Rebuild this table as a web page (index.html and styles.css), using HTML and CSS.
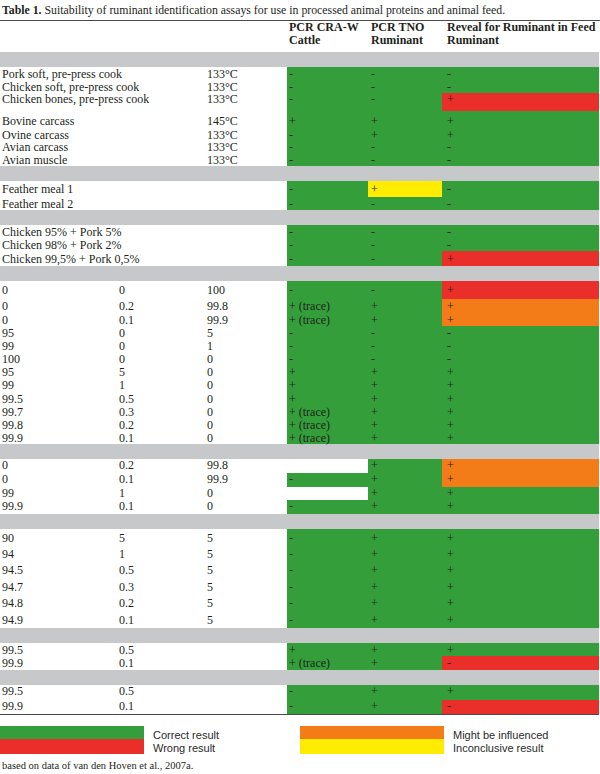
FILE: index.html
```html
<!DOCTYPE html>
<html lang="en">
<head>
<meta charset="utf-8">
<title>Table 1</title>
<link rel="stylesheet" href="styles.css">
</head>
<body>
<div class="page">
  <p class="caption"><b>Table 1.</b> Suitability of ruminant identification assays for use in processed animal proteins and animal feed.</p>
  <table class="assays">
    <colgroup>
      <col class="c-a"><col class="c-b"><col class="c-c"><col class="c-d"><col class="c-e"><col class="c-f">
    </colgroup>
    <thead>
      <tr class="head">
        <th colspan="3"></th>
        <th class="pd">PCR CRA-W<br>Cattle</th>
        <th class="pe">PCR TNO<br>Ruminant</th>
        <th class="pf">Reveal for Ruminant in Feed<br>Ruminant</th>
      </tr>
    </thead>
    <tbody>
      <tr class="band"><td colspan="6"></td></tr>
      <tr class="h13"><td colspan="2" class="pa">Pork soft, pre-press cook</td><td class="pc">133°C</td><td class="pd g">-</td><td class="pe g">-</td><td class="pf g">-</td></tr>
      <tr class="h13"><td colspan="2" class="pa">Chicken soft, pre-press cook</td><td class="pc">133°C</td><td class="pd g">-</td><td class="pe g">-</td><td class="pf g">-</td></tr>
      <tr class="h18 top"><td colspan="2" class="pa">Chicken bones, pre-press cook</td><td class="pc">133°C</td><td class="pd g">-</td><td class="pe g">-</td><td class="pf r">+</td></tr>
      <tr class="h17 bot"><td colspan="2" class="pa">Bovine carcass</td><td class="pc">145°C</td><td class="pd g">+</td><td class="pe g">+</td><td class="pf g">+</td></tr>
      <tr class="h13"><td colspan="2" class="pa">Ovine carcass</td><td class="pc">133°C</td><td class="pd g">-</td><td class="pe g">+</td><td class="pf g">+</td></tr>
      <tr class="h12"><td colspan="2" class="pa">Avian carcass</td><td class="pc">133°C</td><td class="pd g">-</td><td class="pe g">-</td><td class="pf g">-</td></tr>
      <tr class="h13"><td colspan="2" class="pa">Avian muscle</td><td class="pc">133°C</td><td class="pd g">-</td><td class="pe g">-</td><td class="pf g">-</td></tr>

      <tr class="band"><td colspan="6"></td></tr>
      <tr class="h16"><td colspan="2" class="pa">Feather meal 1</td><td class="pc"></td><td class="pd g">-</td><td class="pe y">+</td><td class="pf g">-</td></tr>
      <tr class="h13"><td colspan="2" class="pa">Feather meal 2</td><td class="pc"></td><td class="pd g">-</td><td class="pe g">-</td><td class="pf g">-</td></tr>

      <tr class="band"><td colspan="6"></td></tr>
      <tr class="h14"><td colspan="2" class="pa">Chicken 95% + Pork 5%</td><td class="pc"></td><td class="pd g">-</td><td class="pe g">-</td><td class="pf g">-</td></tr>
      <tr class="h12"><td colspan="2" class="pa">Chicken 98% + Pork 2%</td><td class="pc"></td><td class="pd g">-</td><td class="pe g">-</td><td class="pf g">-</td></tr>
      <tr class="h15"><td colspan="2" class="pa">Chicken 99,5% + Pork 0,5%</td><td class="pc"></td><td class="pd g">-</td><td class="pe g">-</td><td class="pf r">+</td></tr>

      <tr class="band"><td colspan="6"></td></tr>
      <tr class="h18"><td class="pa">0</td><td class="pb">0</td><td class="pc">100</td><td class="pd g">-</td><td class="pe g">-</td><td class="pf r">+</td></tr>
      <tr class="h14"><td class="pa">0</td><td class="pb">0.2</td><td class="pc">99.8</td><td class="pd g">+ (trace)</td><td class="pe g">+</td><td class="pf o">+</td></tr>
      <tr class="h13"><td class="pa">0</td><td class="pb">0.1</td><td class="pc">99.9</td><td class="pd g">+ (trace)</td><td class="pe g">+</td><td class="pf o">+</td></tr>
      <tr class="h13"><td class="pa">95</td><td class="pb">0</td><td class="pc">5</td><td class="pd g">-</td><td class="pe g">-</td><td class="pf g">-</td></tr>
      <tr class="h13"><td class="pa">99</td><td class="pb">0</td><td class="pc">1</td><td class="pd g">-</td><td class="pe g">-</td><td class="pf g">-</td></tr>
      <tr class="h13"><td class="pa">100</td><td class="pb">0</td><td class="pc">0</td><td class="pd g">-</td><td class="pe g">-</td><td class="pf g">-</td></tr>
      <tr class="h13"><td class="pa">95</td><td class="pb">5</td><td class="pc">0</td><td class="pd g">+</td><td class="pe g">+</td><td class="pf g">+</td></tr>
      <tr class="h14"><td class="pa">99</td><td class="pb">1</td><td class="pc">0</td><td class="pd g">+</td><td class="pe g">+</td><td class="pf g">+</td></tr>
      <tr class="h13"><td class="pa">99.5</td><td class="pb">0.5</td><td class="pc">0</td><td class="pd g">+</td><td class="pe g">+</td><td class="pf g">+</td></tr>
      <tr class="h13"><td class="pa">99.7</td><td class="pb">0.3</td><td class="pc">0</td><td class="pd g">+ (trace)</td><td class="pe g">+</td><td class="pf g">+</td></tr>
      <tr class="h13"><td class="pa">99.8</td><td class="pb">0.2</td><td class="pc">0</td><td class="pd g">+ (trace)</td><td class="pe g">+</td><td class="pf g">+</td></tr>
      <tr class="h13"><td class="pa">99.9</td><td class="pb">0.1</td><td class="pc">0</td><td class="pd g">+ (trace)</td><td class="pe g">+</td><td class="pf g">+</td></tr>

      <tr class="band"><td colspan="6"></td></tr>
      <tr class="h14 top"><td class="pa">0</td><td class="pb">0.2</td><td class="pc">99.8</td><td class="pd"></td><td class="pe g">+</td><td class="pf o">+</td></tr>
      <tr class="h14 top"><td class="pa">0</td><td class="pb">0.1</td><td class="pc">99.9</td><td class="pd g">-</td><td class="pe g">+</td><td class="pf o">+</td></tr>
      <tr class="h13 top"><td class="pa">99</td><td class="pb">1</td><td class="pc">0</td><td class="pd"></td><td class="pe g">+</td><td class="pf g">+</td></tr>
      <tr class="h14 top"><td class="pa">99.9</td><td class="pb">0.1</td><td class="pc">0</td><td class="pd g">-</td><td class="pe g">+</td><td class="pf g">+</td></tr>

      <tr class="band"><td colspan="6"></td></tr>
      <tr class="h17"><td class="pa">90</td><td class="pb">5</td><td class="pc">5</td><td class="pd g">-</td><td class="pe g">+</td><td class="pf g">+</td></tr>
      <tr class="h16"><td class="pa">94</td><td class="pb">1</td><td class="pc">5</td><td class="pd g">-</td><td class="pe g">+</td><td class="pf g">+</td></tr>
      <tr class="h16"><td class="pa">94.5</td><td class="pb">0.5</td><td class="pc">5</td><td class="pd g">-</td><td class="pe g">+</td><td class="pf g">+</td></tr>
      <tr class="h17"><td class="pa">94.7</td><td class="pb">0.3</td><td class="pc">5</td><td class="pd g">-</td><td class="pe g">+</td><td class="pf g">+</td></tr>
      <tr class="h16"><td class="pa">94.8</td><td class="pb">0.2</td><td class="pc">5</td><td class="pd g">-</td><td class="pe g">+</td><td class="pf g">+</td></tr>
      <tr class="h17"><td class="pa">94.9</td><td class="pb">0.1</td><td class="pc">5</td><td class="pd g">-</td><td class="pe g">+</td><td class="pf g">+</td></tr>

      <tr class="band"><td colspan="6"></td></tr>
      <tr class="h13"><td class="pa">99.5</td><td class="pb">0.5</td><td class="pc"></td><td class="pd g">+</td><td class="pe g">+</td><td class="pf g">+</td></tr>
      <tr class="h14"><td class="pa">99.9</td><td class="pb">0.1</td><td class="pc"></td><td class="pd g">+ (trace)</td><td class="pe g">+</td><td class="pf r">-</td></tr>

      <tr class="band"><td colspan="6"></td></tr>
      <tr class="h15 top"><td class="pa">99.5</td><td class="pb">0.5</td><td class="pc"></td><td class="pd g">-</td><td class="pe g">+</td><td class="pf g">+</td></tr>
      <tr class="h14 top"><td class="pa">99.9</td><td class="pb">0.1</td><td class="pc"></td><td class="pd g">-</td><td class="pe g">+</td><td class="pf r">-</td></tr>
    </tbody>
  </table>

  <div class="legend">
    <div class="key">
      <div class="bars"><div class="bar bar-g"></div><div class="bar bar-r"></div></div>
      <div class="labels"><span>Correct result</span><span>Wrong result</span></div>
    </div>
    <div class="key">
      <div class="bars"><div class="bar bar-o"></div><div class="bar bar-y"></div></div>
      <div class="labels"><span>Might be influenced</span><span>Inconclusive result</span></div>
    </div>
  </div>
  <p class="source">based on data of van den Hoven et al., 2007a.</p>
</div>
</body>
</html>
```

FILE: styles.css
```css
html, body {
  margin: 0;
  padding: 0;
  background: #ffffff;
}

.page {
  width: 600px;
  font-family: "Liberation Serif", "Times New Roman", serif;
  color: #231f20;
}

.caption {
  margin: 0;
  height: 20px;
  line-height: 20px;
  padding-left: 2px;
  font-size: 11.8px;
  border-bottom: 1px solid #4a4a4a;
  white-space: nowrap;
}

.caption b {
  font-weight: bold;
}

.assays {
  width: 599px;
  table-layout: fixed;
  border-collapse: separate;
  border-spacing: 0;
  border-bottom: 1px solid #4a4a4a;
  font-size: 12px;
  line-height: 12px;
}

.c-a { width: 117px; }
.c-b { width: 88px; }
.c-c { width: 82px; }
.c-d { width: 81px; }
.c-e { width: 74px; }
.c-f { width: 157px; }

.assays td,
.assays th {
  padding: 0;
  white-space: nowrap;
  overflow: visible;
  vertical-align: middle;
  text-align: left;
}

.head {
  height: 31px;
}

.head th {
  vertical-align: top;
  font-weight: bold;
  line-height: 13px;
  padding-top: 0;
}

.band td {
  height: 15px;
  background: #c7c8ca;
}

.h12 { height: 12px; }
.h13 { height: 13px; }
.h14 { height: 14px; }
.h15 { height: 15px; }
.h16 { height: 16px; }
.h17 { height: 17px; }
.h18 { height: 18px; }

.assays .top td { vertical-align: top; }
.assays .bot td { vertical-align: bottom; padding-bottom: 1px; }

.pa { padding-left: 2px !important; }
.pb { padding-left: 2px !important; }
.pc { padding-left: 2px !important; }
.pd { padding-left: 2px !important; }
.pe { padding-left: 3px !important; }
.pf { padding-left: 5px !important; }

.g { background: #339e3a; }
.r { background: #ea2e2a; }
.o { background: #f47c18; }
.y { background: #ffec00; }

.legend {
  display: flex;
  margin-top: 11px;
  font-family: "Liberation Sans", Arial, sans-serif;
  font-size: 11px;
  color: #2a2a2a;
}

.key {
  display: flex;
  gap: 9px;
  width: 303px;
}

.bars {
  display: flex;
  flex-direction: column;
  width: 144px;
}

.bar-g { height: 13px; background: #339e3a; }
.bar-r { height: 15px; background: #ea2e2a; }
.bar-o { height: 13px; background: #f47c18; }
.bar-y { height: 15px; background: #ffec00; }

.labels {
  display: flex;
  flex-direction: column;
  padding-top: 3px;
  line-height: 13px;
}

.source {
  margin: 4px 0 0;
  padding-left: 2px;
  font-size: 10.5px;
  line-height: 14px;
}
```
